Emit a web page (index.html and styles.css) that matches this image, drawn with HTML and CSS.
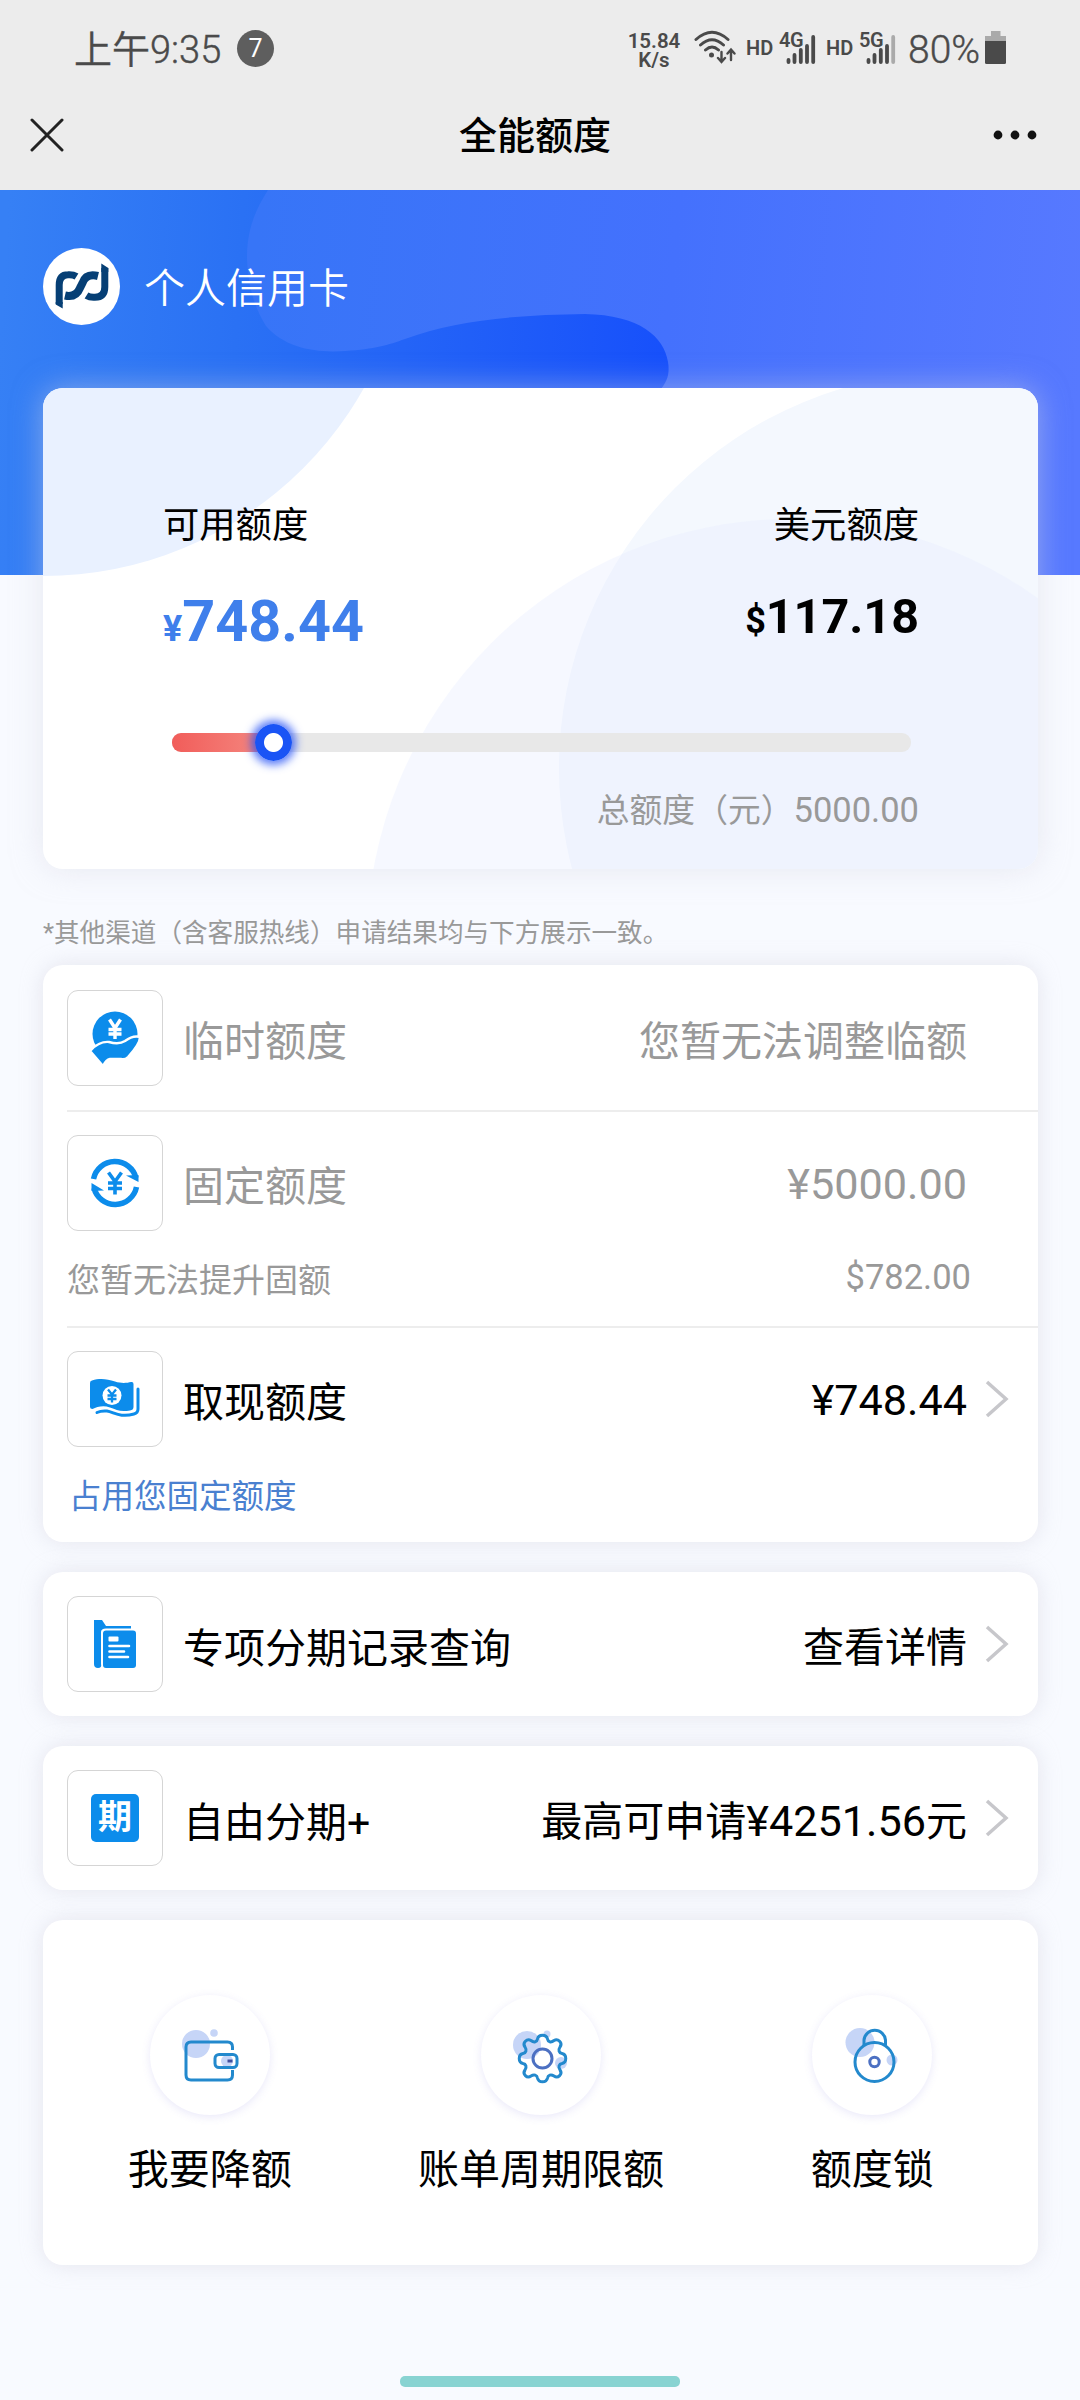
FILE: index.html
```html
<!DOCTYPE html>
<html lang="zh-CN">
<head>
<meta charset="utf-8">
<title>全能额度</title>
<link rel="stylesheet" href="styles.css">
</head>
<body>
<div class="page">
  <header class="top">
    <div class="status">
      <span class="time">上午9:35</span>
      <span class="count">7</span>
      <span class="speed"><span>15.84</span><span>K/s</span></span>
      <svg class="wifi" width="42" height="36" viewBox="0 0 42 36" fill="none" stroke="#4a4a4a" stroke-width="3" stroke-linecap="round">
        <path d="M2 9.500Q18 -5 34 9.500M6.500 15Q18 4.500 29.500 15M11.500 20Q18 14 24.500 20"/>
        <circle cx="17.500" cy="25" r="2.500" fill="#4a4a4a" stroke="none"/>
        <path stroke-width="2.400" d="M27.500 22V31M24 28L27.500 32L31 28M37 30V20M33.500 23.500L37 19.500L40.500 23.500"/>
      </svg>
      <span class="hd hd-first">HD</span>
      <span class="signal">
        <svg width="30" height="30" viewBox="0 0 30 30" stroke="#4a4a4a" stroke-width="3.800" stroke-linecap="round"><path d="M2.500 25V27M8.500 20V27M14.800 15V27M21 11V27M27.200 2V27"/></svg>
        <span class="net">4G</span>
      </span>
      <span class="hd hd-second">HD</span>
      <span class="signal">
        <svg width="30" height="30" viewBox="0 0 30 30" stroke="#4a4a4a" stroke-width="3.800" stroke-linecap="round"><path d="M2.500 25V27M8.500 20V27M14.800 15V27M21 11V27"/><path stroke="#aaa" d="M27.200 2V27"/></svg>
        <span class="net">5G</span>
      </span>
      <span class="percent">80%</span>
      <svg class="battery" width="22" height="34" viewBox="0 0 22 34"><path fill="#aaa" d="M6 0H15.500V5H21V12H0V5H6Z"/><path fill="#4a4a4a" d="M0 10H21V31.500Q21 33 19.500 33H1.500Q0 33 0 31.500Z"/></svg>
    </div>
    <div class="nav">
      <svg class="close" width="34" height="34" viewBox="0 0 34 34" stroke="#222" stroke-width="3" stroke-linecap="round"><path d="M2 2L32 32M32 2L2 32"/></svg>
      <h1 class="title">全能额度</h1>
      <svg class="more" width="46" height="12" viewBox="0 0 46 12" fill="#111"><circle cx="6" cy="6" r="4.400"/><circle cx="23" cy="6" r="4.400"/><circle cx="40" cy="6" r="4.400"/></svg>
    </div>
  </header>

  <section class="hero">
    <svg class="hero-bg" width="1080" height="385" viewBox="0 0 1080 385">
      <defs>
        <linearGradient id="deep" gradientUnits="userSpaceOnUse" x1="0" y1="150" x2="670" y2="190"><stop offset="0" stop-color="#3680f5"/><stop offset=".35" stop-color="#2a71f4"/><stop offset=".6" stop-color="#2464f7"/><stop offset="1" stop-color="#1750fb"/></linearGradient>
        <linearGradient id="light" gradientUnits="userSpaceOnUse" x1="250" y1="120" x2="1080" y2="200"><stop offset="0" stop-color="#3775f7"/><stop offset=".5" stop-color="#4471fd"/><stop offset="1" stop-color="#5779ff"/></linearGradient>
      </defs>
      <rect width="1080" height="385" fill="url(#deep)"/>
      <path fill="url(#light)" d="M268 0C252 25 247 45 247 68C248 100 257 122 266 136C285 158 315 163 345 161C375 159 388 155 405 149C455 130 515 125 585 124C640 125 664 147 668 172C670 184 667 192 660 200L640 385H1080V0Z"/>
    </svg>
    <div class="owner">
      <svg class="logo" width="77" height="77" viewBox="0 0 77 77">
        <circle cx="38.500" cy="38.500" r="38.500" fill="#fff"/>
        <g fill="none" stroke="#063f75" stroke-width="7"><path d="M16.200 56V37Q16.200 26.700 25 26.700Q30 26.300 33.500 28.500"/><path stroke-width="8" d="M22 47.500Q33 50 37 40L39.500 35Q43 25 55 28"/><path d="M43.500 47.500Q47 49.700 52 49.300Q61.800 49.300 61.800 39V20"/></g>
        <path fill="#063f75" d="M12.700 54H19.700V60.500L12.700 56.500ZM58.300 15.500L65.300 20V24H58.300Z"/>
      </svg>
      <span class="owner-name">个人信用卡</span>
    </div>
  </section>

  <section class="quota">
    <svg class="quota-bg" width="995" height="481" viewBox="0 0 995 481">
      <circle cx="0" cy="-180" r="368" fill="#e9f1ff"/>
      <circle cx="912" cy="380" r="396" fill="#f4f8fe"/>
      <circle cx="748" cy="555" r="424" fill="#e6ecff" fill-opacity=".35"/>
    </svg>
    <div class="quota-row labels"><span>可用额度</span><span>美元额度</span></div>
    <div class="quota-row amounts">
      <span class="cny"><small>¥</small>748.44</span>
      <span class="usd"><small>$</small>117.18</span>
    </div>
    <div class="track"><div class="fill" style="width:13.8%"></div><div class="knob" style="left:13.8%"></div></div>
    <div class="total">总额度（元）<span class="total-figure">5000.00</span></div>
  </section>

  <p class="note">*其他渠道（含客服热线）申请结果均与下方展示一致。</p>

  <section class="card list">
    <div class="row muted">
      <span class="tile"><svg width="48" height="54" viewBox="0 0 48 54"><circle cx="24" cy="23" r="22.500" fill="#0c8ceb"/><path fill="#0c8ceb" stroke="#fff" stroke-width="2.400" stroke-linejoin="round" d="M-1 40Q8 30 18 31Q28 34 34 30Q42 24 49 26Q49 33 37 46Q34 49 30 48H19Q15 49 12 55Z"/><path d="M18.500 8.500L24 17L29.500 8.500M24 17V28M17.500 18.500H30.500M17.500 23H30.500" fill="none" stroke="#fff" stroke-width="3.400"/></svg></span>
      <span class="name">临时额度</span><span class="value">您暂无法调整临额</span>
    </div>
    <div class="group">
      <div class="row muted">
        <span class="tile"><svg width="50" height="50" viewBox="0 0 50 50"><g fill="none" stroke="#0c8ceb" stroke-width="5.500"><path d="M3.500 21A21.800 21.800 0 0 1 46 20"/><path d="M46.500 29A21.800 21.800 0 0 1 4 30"/><path stroke-width="3.600" d="M18.500 14.500L25 23.500L31.500 14.500M25 23V36.500M18 25H32M18 30.500H32"/></g><path fill="#0c8ceb" d="M36 17.500L48.500 17V24ZM14 32.500L1.500 25V33Z"/></svg></span>
        <span class="name">固定额度</span><span class="value num">¥5000.00</span>
      </div>
      <div class="sub muted"><span>您暂无法提升固额</span><span class="usd-limit">$782.00</span></div>
    </div>
    <div class="group">
      <div class="row">
        <span class="tile"><svg width="50" height="40" viewBox="0 0 50 40"><path fill="#0c8ceb" d="M0 4Q0 1.500 2 1.500C10 -1 17 0 25 2.500C31 4.500 37 4 41 3Q43.500 2.500 43.500 5V28Q43.500 31 40 31.500C30 33 27 31 20 28.500C13 26 7 28 2.500 30Q0 30 0 28Z"/><path fill="none" stroke="#0c8ceb" stroke-width="3" stroke-linecap="round" d="M48 10V30Q48 34 44 35C30 39 24 33 17 32Q11 31.500 7 33.500"/><circle cx="22" cy="16.500" r="9.500" fill="#fff"/><path fill="none" stroke="#0c8ceb" stroke-width="2.300" d="M18 10.500L22 15.500L26 10.500M22 15V23.500M17.500 16.500H26.500M17.500 20H26.500"/></svg></span>
        <span class="name">取现额度</span><span class="value num">¥748.44</span>
        <svg class="chevron" width="24" height="38" viewBox="0 0 24 38"><path d="M2 2L21 19L2 36"/></svg>
      </div>
      <div class="sub link"><span>占用您固定额度</span></div>
    </div>
  </section>

  <section class="card">
    <div class="row">
      <span class="tile"><svg width="42" height="50" viewBox="0 0 42 50"><path fill="#0c8ceb" d="M0 1H8L12 7H37V9.500H12Q7 9.500 7 13V45Q8 49 4 49Q0 49 0 45Z"/><rect x="9" y="11.500" width="33" height="37.500" rx="3" fill="#0c8ceb"/><path stroke="#fff" stroke-width="2.600" stroke-linecap="round" d="M15.500 27H35M15.500 32.500H30M15.500 38H34"/><rect x="14.500" y="17.500" width="10" height="5" rx="1" fill="#fff"/></svg></span>
      <span class="name">专项分期记录查询</span><span class="value">查看详情</span>
      <svg class="chevron" width="24" height="38" viewBox="0 0 24 38"><path d="M2 2L21 19L2 36"/></svg>
    </div>
  </section>

  <section class="card">
    <div class="row">
      <span class="tile"><span class="qi">期</span></span>
      <span class="name">自由分期+</span><span class="value">最高可申请<span class="figure">¥4251.56</span>元</span>
      <svg class="chevron" width="24" height="38" viewBox="0 0 24 38"><path d="M2 2L21 19L2 36"/></svg>
    </div>
  </section>

  <section class="card actions">
    <div class="action">
      <span class="disc"><svg width="120" height="120" viewBox="0 0 120 120" fill="none" stroke="#2389cd" stroke-width="3"><g stroke="none" fill="#c6d5f7"><circle cx="46" cy="49" r="14"/><circle cx="64" cy="38" r="3.800"/><circle cx="77" cy="66" r="6"/></g><path d="M82.500 55V52Q82.500 47 77.500 47H41Q36 47 36 52V80Q36 85 41 85H77.500Q82.500 85 82.500 80V75"/><rect x="65" y="59.500" width="22" height="13" rx="4"/><path stroke="#414f9e" d="M77.500 66H82.500"/></svg></span>
      <span>我要降额</span>
    </div>
    <div class="action">
      <span class="disc"><svg width="120" height="120" viewBox="0 0 120 120" fill="none" stroke="#2389cd" stroke-width="3"><g stroke="none" fill="#c6d5f7"><circle cx="46" cy="50" r="14"/><circle cx="66" cy="39" r="3.500"/><circle cx="80" cy="68" r="6"/></g><path stroke-linejoin="round" d="M56.500 44C57.500 39 65.500 39 66.500 44C67 47 70 48 73 45.500C77 43 82 48 79 52C77 55 78 58 81 58.500C86 59.500 86 67.500 81 68.500C78 69 77 72 79 75C82 79 77 84 73 81C70 79 67 80 66.500 83C65.500 88 57.500 88 56.500 83C56 80 53 79 50 81C46 84 41 79 44 75C46 72 45 69 42 68.500C37 67.500 37 59.500 42 58.500C45 58 46 55 44 52C41 48 46 43 50 45.500C53 48 56 47 56.500 44Z"/><circle cx="61.500" cy="63.500" r="9.500" stroke="#4c70c2"/></svg></span>
      <span>账单周期限额</span>
    </div>
    <div class="action">
      <span class="disc"><svg width="120" height="120" viewBox="0 0 120 120" fill="none" stroke="#2389cd" stroke-width="3"><g stroke="none" fill="#c6d5f7"><circle cx="48" cy="47.500" r="14.500"/><circle cx="80" cy="65" r="5.500"/></g><circle cx="62.500" cy="67" r="19.500"/><path d="M52 50V45A10.800 10.800 0 0 1 73.500 45V50"/><circle cx="62.500" cy="67" r="4.700" stroke="#4c70c2"/></svg></span>
      <span>额度锁</span>
    </div>
  </section>
  <div class="home"></div>
</div>
</body>
</html>
```
FILE: styles.css
```css
* { box-sizing: border-box; }
body { margin: 0; background: #f8faff; font-family: Roboto, "Noto Sans CJK SC", sans-serif; color: #000; }
.page { width: 1080px; height: 2400px; display: flex; flex-direction: column; overflow: hidden; }
svg { display: block; flex: none; }

.top { height: 190px; background: #ececec; flex: none; }
.status { height: 96px; padding: 0 73px 0 74px; display: flex; align-items: center; color: #4a4a4a; }
.time { font-size: 38px; line-height: 94px; padding-top: 3px; font-weight: 350; -webkit-text-stroke: .4px #4a4a4a; white-space: nowrap; width: 163px; }
.count { width: 37px; height: 37px; border-radius: 50%; background: #5e5e5e; color: #fff; font-size: 25px; line-height: 38px; text-align: center; }
.speed { margin-left: auto; width: 56px; display: flex; flex-direction: column; align-items: center; gap: 1px; font-size: 20.500px; line-height: 19px; font-weight: 600; padding-top: 4px; }
.speed span { display: block; height: 18px; line-height: 18px; }
.wifi { margin: 0 10px 0 12px; }
.hd { font-size: 20px; font-weight: 600; width: 26px; }
.signal { position: relative; width: 37px; height: 34px; padding-left: 7px; padding-top: 4px; margin-left: 7px; }
.net { position: absolute; left: 0; top: -2px; font-size: 20px; line-height: 22px; font-weight: 600; background: linear-gradient(#ececec, #ececec) 0 0 / 23px 17px no-repeat; letter-spacing: -.5px; }
.hd-second { margin-left: 10px; }
.percent { font-size: 39px; font-weight: 350; -webkit-text-stroke: .4px #4a4a4a; margin-left: 12px; width: 72px; padding-top: 3px; }
.battery { margin-left: 5px; }
.nav { height: 78px; padding: 0 42px 0 30px; display: flex; align-items: center; justify-content: space-between; }
.title { margin: 0; font-size: 38px; line-height: 50px; padding-top: 2px; font-weight: 500; transform: translateX(7px); }

.hero { position: relative; height: 385px; flex: none; padding: 58px 43px; }
.hero-bg { position: absolute; inset: 0; }
.owner { position: relative; display: flex; align-items: center; gap: 24px; }
.owner-name { color: #fff; font-size: 41px; line-height: 60px; padding-top: 4px; font-weight: 350; }

.quota { position: relative; width: 995px; height: 481px; margin: -187px 0 0 43px; flex: none; background: #fff; border-radius: 20px; box-shadow: 0 0 30px rgba(215,215,225,.5); padding: 111px 119px 0 120px; }
.quota-bg { position: absolute; inset: 0; border-radius: 20px; }
.quota-row { position: relative; display: flex; justify-content: space-between; }
.labels { font-size: 36.300px; line-height: 54px; }
.amounts { font-weight: 700; line-height: 66px; margin-top: 36px; height: 66px; }
.cny { color: #3f7feb; font-size: 57.500px; }
.usd { font-size: 48.500px; margin-top: -5px; }
.cny small { font-size: 36px; }
.usd small { font-size: 36px; }
.track { position: relative; height: 19px; margin: 78px 8px 0 9px; border-radius: 9px; background: #e8e8e8; }
.fill { height: 19px; border-radius: 9px 0 0 9px; background: linear-gradient(90deg, #f15d5a, #f58b83); }
.knob { position: absolute; top: -9px; width: 37px; height: 37px; margin-left: -19px; border-radius: 50%; background: radial-gradient(circle, #fff 9px, #1a54f5 10px); box-shadow: 0 0 8px 4px rgba(36,80,246,.75); }
.total { position: relative; margin-top: 33px; text-align: right; font-size: 32.800px; line-height: 50px; color: #999; }
.total-figure { font-size: 34.500px; }

.note { margin: 45px 0 0 43px; font-size: 25.600px; line-height: 38px; color: #999; }

.card { width: 995px; margin: 30px 0 0 43px; flex: none; background: #fff; border-radius: 20px; box-shadow: 0 0 22px rgba(200,200,210,.4); }
.list { margin-top: 13px; height: 577px; }
.row { height: 144px; padding: 0 29px 0 24px; display: flex; align-items: center; }
.list .row { height: 145px; }
.tile { width: 96px; height: 96px; border: 1px solid #d5d5d5; border-radius: 11px; display: flex; align-items: center; justify-content: center; }
.name { margin-left: 20px; font-size: 41px; line-height: 60px; padding-top: 9px; }
.value { margin-left: auto; margin-right: 42px; font-size: 41px; line-height: 60px; padding-top: 8px; }
.value:not(:last-child) { margin-right: 18px; }
.num { font-size: 43.200px; padding-top: 4px; }
.figure { font-size: 43.200px; }
.chevron { fill: none; stroke: #c7c7cb; stroke-width: 3.500; }
.muted, .muted span { color: #999; }
.group { position: relative; height: 216px; }
.group::before { content: ""; position: absolute; left: 24px; right: 0; top: 0; height: 2px; background: #ededed; }
.sub { display: flex; justify-content: space-between; padding: 0 67px 0 24px; margin-top: 2px; font-size: 33px; line-height: 48px; }
.usd-limit { font-size: 34.500px; line-height: 40px; }
.link { color: #4a80d0; padding-left: 26px; font-size: 32.500px; }
.qi { width: 48px; height: 48px; border-radius: 5px; background: #0c8ceb; color: #fff; font-size: 34px; line-height: 46px; font-weight: 700; text-align: center; }

.actions { height: 345px; display: grid; grid-template-columns: repeat(3, 1fr); padding: 75px 0 0 1px; }
.action { display: flex; flex-direction: column; align-items: center; font-size: 41px; line-height: 60px; gap: 25px; }
.disc { width: 120px; height: 120px; border-radius: 50%; box-shadow: 0 2px 8px rgba(120,110,220,.16); }
.home { width: 280px; height: 11px; border-radius: 5px; background: #88d3d2; margin: 111px auto 0; }
```
